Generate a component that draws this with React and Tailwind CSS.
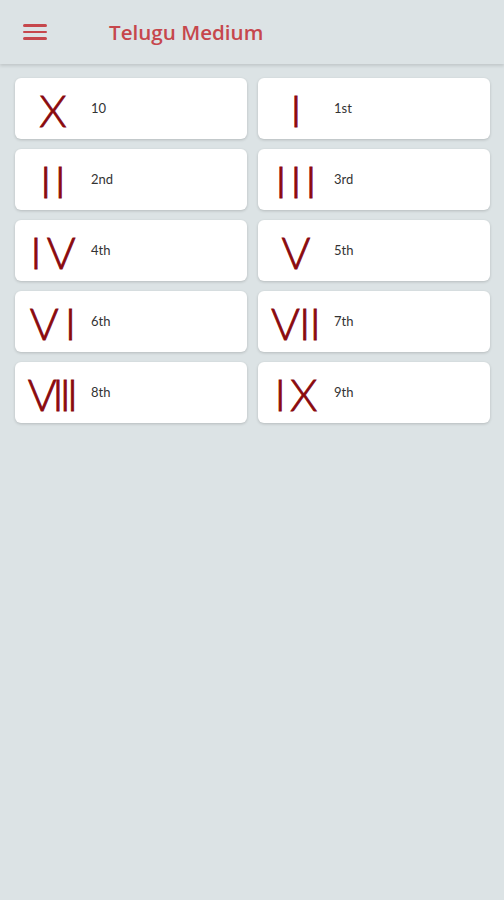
import React from "react";

const items = [
  ["X", "10", ""],
  ["I", "1st", ""],
  ["II", "2nd", "[&>span+span]:ml-[3px]"],
  ["III", "3rd", "[&>span+span]:ml-[3.5px]"],
  ["IV", "4th", "[&>span+span]:ml-[5px]"],
  ["V", "5th", ""],
  ["VI", "6th", "[&>span+span]:ml-[6px]"],
  ["VII", "7th", "[&>span+span]:ml-[-1px]"],
  ["VIII", "8th", "[&>span+span]:ml-[-4.3px]"],
  ["IX", "9th", "[&>span+span]:ml-[4px]"],
];

export default function App() {
  return (
    <div className="min-h-[900px] w-full bg-[#dce3e5]" style={{ fontFamily: "Lato, 'Open Sans', sans-serif" }}>
      <header className="h-[64px] flex items-center bg-[#dce3e5] shadow-[0_2px_3px_rgba(0,0,0,0.12)] relative z-10">
        <div className="ml-[23px] w-[24px] flex flex-col gap-[4px]">
          <span className="block h-[2.5px] bg-[#c6474c] rounded-sm" />
          <span className="block h-[2.5px] bg-[#c6474c] rounded-sm" />
          <span className="block h-[2.5px] bg-[#c6474c] rounded-sm" />
        </div>
        <h1 className="ml-[62px] text-[20.6px] font-semibold text-[#c6474c]" style={{ fontFamily: "'Open Sans', sans-serif" }}>
          Telugu Medium
        </h1>
      </header>
      <main className="grid grid-cols-2 gap-x-[11px] gap-y-[10px] pl-[15px] pr-[14px] pt-[14px]">
        {items.map(([num, label, gap]) => (
          <div key={label} className="h-[61px] bg-white rounded-[6px] shadow-[0_1px_3px_rgba(0,0,0,0.18)] flex items-center">
            <div className="w-[60px] ml-[8px] mt-[3px] flex justify-center">
              <span className={`flex ${gap} text-[44px] leading-none font-light text-[#8a0a0e] [-webkit-text-stroke:0.8px_#8a0a0e]`}>
                {num.split("").map((ch, i) => (
                  <span key={i}>{ch}</span>
                ))}
              </span>
            </div>
            <span className="ml-[8px] text-[13px] text-[#333333]">{label}</span>
          </div>
        ))}
      </main>
    </div>
  );
}
